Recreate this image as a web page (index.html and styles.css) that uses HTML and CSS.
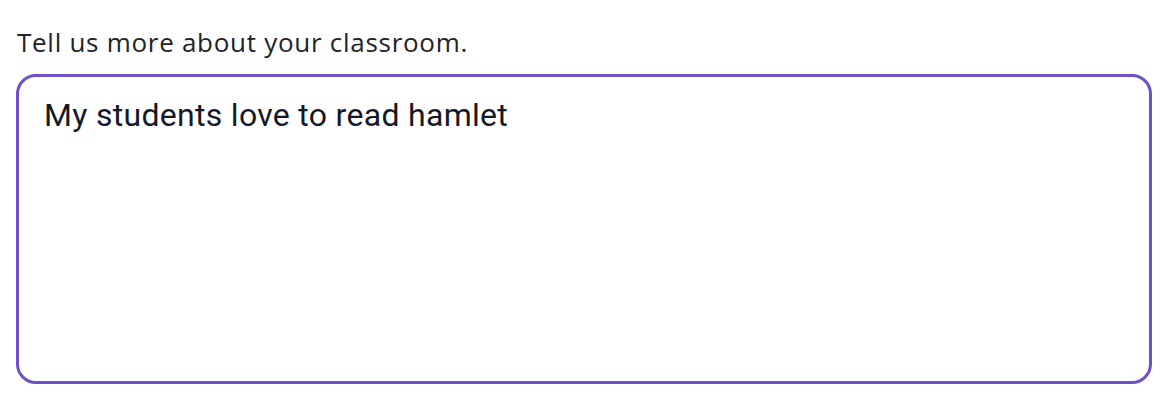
FILE: index.html
```html
<!DOCTYPE html>
<html>
<head>
<meta charset="utf-8">
<link rel="stylesheet" href="styles.css">
</head>
<body>
<div class="field">
  <label class="label" for="about">Tell us more about your classroom.</label>
  <textarea id="about" class="input">My students love to read hamlet</textarea>
</div>
</body>
</html>
```
FILE: styles.css
```css
html, body {
  margin: 0;
  padding: 0;
  background: #ffffff;
}
.field {
  display: flex;
  flex-direction: column;
  padding: 24px 20px 0 16px;
  gap: 14px;
}
.label {
  font-family: "Open Sans", "Noto Sans", sans-serif;
  font-size: 26px;
  font-weight: 500;
  color: #232327;
  padding-left: 1px;
  letter-spacing: 0.72px;
  line-height: 36px;
}
.input {
  box-sizing: border-box;
  width: 1136px;
  height: 310px;
  border: 3px solid #6e50c9;
  border-radius: 20px;
  padding: 18px 25px;
  font-family: "Roboto", sans-serif;
  font-size: 32px;
  letter-spacing: 0.3px;
  line-height: 40px;
  color: #151827;
  resize: none;
  outline: none;
  margin: 0;
}
```
